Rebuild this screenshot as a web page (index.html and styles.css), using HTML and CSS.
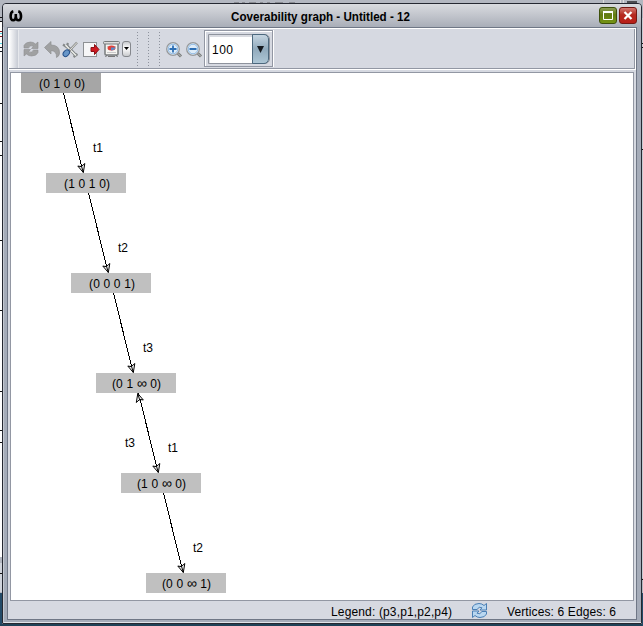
FILE: index.html
```html
<!DOCTYPE html>
<html lang="en">
<head>
<meta charset="utf-8">
<title>Coverability graph</title>
<link rel="stylesheet" href="styles.css">
</head>
<body>
<svg class="backdrop" width="643" height="626" shape-rendering="crispEdges">
  <rect width="643" height="626" fill="#b3b7c0"/>
  <rect y="21" width="2" height="536" fill="#fff"/>
  <path d="M0 17.5h2M0 21.5h2M0 103.5h2M0 141.5h2M0 155.5h2M0 240.5h2M0 310.5h2M0 391.5h2M0 430.5h2M0 442.5h2" stroke="#111"/>
  <path d="M0 31.5h2M0 36.5h2" stroke="#8b1d24"/>
  <path d="M0 33.5h2M0 43.5h2M0 573.5h2" stroke="#55dce8"/>
  <path d="M0 47.5h2M0 51.5h2" stroke="#171b22"/>
  <rect y="563" width="2" height="29" fill="#d0d4dc"/>
  <path d="M0 573.5h2" stroke="#111"/>
  <rect y="593" width="2" height="33" fill="#244b68"/>
  <rect y="624" width="643" height="2" fill="#1f4257"/>
  <path d="M234 2.5h5M242 2.5h3M249 2.5h7M260 2.5h3M267 2.5h3M275 2.5h8M289 2.5h6" stroke="#8a8c92"/>
  <path d="M603.5 0v3M620.5 0v3M623.5 0v3" stroke="#ddd"/>
  <rect x="627" y="1" width="10" height="2" fill="#4b4c50"/>
  <rect x="642" y="18" width="1" height="560" fill="#c6cad2"/>
  <rect x="642" y="593" width="1" height="33" fill="#244b68"/>
  <path d="M642 43.5h1M642 47.5h1M642 149.5h1M642 579.5h1" stroke="#111"/>
</svg>
<div class="window">
  <header class="titlebar">
    <svg class="logo" width="14" height="12" viewBox="0 0 14 12"><path d="M4.300 1.300C.8 2.200.7 10.300 4.200 10.300Q6.600 10.300 6.800 6.500V4V6.500Q7 10.300 9.500 10.300C13 10.300 12.800 2.200 9.300 1.300" fill="none" stroke="#000" stroke-width="2.600"/></svg>
    <h1 class="title"><svg width="190" height="20"><text x="5" y="15" textLength="179" lengthAdjust="spacingAndGlyphs">Coverability graph - Untitled - 12</text></svg></h1>
    <button class="winbtn max" aria-label="Maximize"><svg width="18" height="17"><path d="M4.500 5.500h9v7H4.500z" fill="none" stroke="#fff"/><path d="M4 5h10" stroke="#fff" stroke-width="2"/></svg></button>
    <button class="winbtn close" aria-label="Close"><svg width="18" height="17"><path d="M5.500 5l7 7M12.500 5l-7 7" stroke="#fff" stroke-width="2.200"/></svg></button>
  </header>
  <main class="body">
    <div class="toolbar">
      <span class="grip"></span>
      <svg class="tools" width="186" height="38" viewBox="18 30 186 38">
        <defs>
          <linearGradient id="btn" x2="0" y2="1"><stop stop-color="#c5c7cb"/><stop offset=".45" stop-color="#fff"/><stop offset="1" stop-color="#c5c7ca"/></linearGradient>
          <g id="refresh">
            <path d="M.5 6.500V4Q2 .5 7 .5Q10 .5 12 2.500L14.500 .5V7H8L10 4.800Q7 3 5 6.500Z"/>
            <path d="M14.500 8.500V11Q13 14.500 8 14.500Q5 14.500 3 12.500L.5 14.500V8H7L5 10.200Q8 12 10 8.500Z"/>
          </g>
        </defs>
        <use href="#refresh" x="23.500" y="41.500" fill="#a0a1a2" stroke="#8e8f91" stroke-width=".6"/>
        <path d="M44.500 47.500L51 41.500V45Q59.500 45 59.500 53Q59.500 56 56.500 57.500Q57 51 51 50.500V54Z" fill="#a0a1a2" stroke="#8e8f91" stroke-width=".7"/>
        <path d="M66 45L75.500 55" stroke="#777c7e" stroke-width="3.200"/>
        <path d="M63 44.500L66.500 47L68 43M73.500 57L77.500 54" stroke="#85898a" stroke-width="2.200" fill="none"/>
        <path d="M65.500 45L76 55.500" stroke="#eef0ec" stroke-width="1.500"/>
        <path d="M77 42.500L68.500 51.500" stroke="#898b8b" stroke-width="2.400"/>
        <path d="M77 42.500L70 50" stroke="#e5e4dc" stroke-width="1"/>
        <ellipse cx="66.300" cy="53.200" rx="2.700" ry="3.700" transform="rotate(42 66.300 53.200)" fill="#6796c8" stroke="#234f89"/>
        <rect x="83.500" y="42.500" width="13" height="14" fill="#f6f6f7" stroke="#8d9093"/>
        <path d="M91 47.500H94.500V44.500L99 49.500L94.500 54.500V51.500H91Z" fill="#d01820" stroke="#8b1015"/>
        <path d="M107 55L105.500 57M116 55L117.500 57" stroke="#666"/>
        <rect x="105" y="43" width="13" height="12" rx="1" fill="#f5f5f2" stroke="#777b7c" stroke-width="1.500"/>
        <rect x="103.500" y="41.500" width="16" height="2.500" rx="1" fill="#ddd" stroke="#777b7c"/>
        <path d="M107 46.500h9M107 52.500h9" stroke="#c9c9c9"/>
        <ellipse cx="111.500" cy="48" rx="4" ry="2.500" fill="#df4038"/><path d="M111 47.500h4.500q-.5 2.500-4.500 3Z" fill="#598aca"/>
        <path d="M108 56.500h7" stroke="#777"/>
        <rect x="122.500" y="41.500" width="8" height="15" rx="2.500" fill="url(#btn)" stroke="#85888d"/>
        <path d="M124 47h5l-2.500 3Z" fill="#000"/>
        <path d="M137.500 32V66M148.500 32V66M159.500 32V66" stroke="#8e939d" stroke-dasharray="1 2"/>
        <g id="zoomout">
          <path d="M197 52.500L201 56.500" stroke="#76797a" stroke-width="3"/><path d="M198 53.500L201 56.500" stroke="#c7c9c5"/>
          <circle cx="193" cy="49" r="6.300" fill="#e9f3fc" stroke="#96999b" stroke-width="1.300"/>
          <circle cx="193" cy="49" r="4.800" fill="#deecf8" stroke="#8db8e2"/>
          <path d="M189.500 49h7" stroke="#2d6fb4" stroke-width="1.800"/>
        </g>
        <use href="#zoomout" x="-20"/><path d="M173 45.500v7" stroke="#2d6fb4" stroke-width="1.800"/>
      </svg>
      <div class="combo-frame"><div class="combo"><span class="value"><svg width="28" height="18"><text x="0" y="14" textLength="21">100</text></svg></span><button class="drop" aria-label="Choose zoom"><svg width="16" height="28"><path d="M5 11h7L8.500 18Z" fill="#15191e"/></svg></button></div></div>
    </div>
    <section class="canvas">
      <svg width="622" height="527" viewBox="11 73 622 527">
        <defs><g id="head" fill="none" stroke="#000"><path d="M0 0L-5.500-6.500L-2-5.800L1.500-9Z" fill="#fff"/><path d="M-2-7L0 0"/></g></defs>
        <g stroke="#000" shape-rendering="crispEdges"><path d="M63.500 93L83 172M88.500 193L108 272M113.500 293L133 372M138.500 393L158 472M163.500 493L183 572"/></g>
        <use href="#head" x="83.300" y="172.500"/><use href="#head" x="108.300" y="272.500"/><use href="#head" x="133.300" y="372.500"/><use href="#head" x="158.300" y="472.500"/><use href="#head" x="183.300" y="572.500"/>
        <use href="#head" transform="translate(137.800 393.500) rotate(180)"/>
        <rect class="root" x="21" y="73" width="80" height="20"/>
        <g class="node"><rect x="46" y="173" width="80" height="20"/><rect x="71" y="273" width="80" height="20"/><rect x="96" y="373" width="80" height="20"/><rect x="121" y="473" width="80" height="20"/><rect x="146" y="573" width="80" height="20"/></g>
        <text x="39" y="88" textLength="46">(0 1 0 0)</text>
        <text x="64" y="188" textLength="46">(1 0 1 0)</text>
        <text x="89" y="288" textLength="46">(0 0 0 1)</text>
        <text x="112" y="388" textLength="49">(0 1 <tspan class="inf">∞</tspan> 0)</text>
        <text x="137" y="488" textLength="49">(1 0 <tspan class="inf">∞</tspan> 0)</text>
        <text x="162" y="588" textLength="49">(0 0 <tspan class="inf">∞</tspan> 1)</text>
        <text x="93" y="152">t1</text><text x="118" y="252">t2</text><text x="143" y="352">t3</text>
        <text x="125" y="447">t3</text><text x="168" y="452">t1</text><text x="193" y="552">t2</text>
      </svg>
    </section>
    <footer class="status">
      <svg width="124" height="18"><text x="1" y="14" textLength="121">Legend: (p3,p1,p2,p4)</text></svg>
      <svg width="16" height="16" viewBox="0 0 16 16"><use href="#refresh" fill="#b9d7f0" stroke="#4a7fb5" stroke-width="1"/></svg>
      <svg width="112" height="18"><text x="1" y="14" textLength="109">Vertices: 6 Edges: 6</text></svg>
    </footer>
  </main>
</div>
</body>
</html>
```

FILE: styles.css
```css
* { box-sizing: border-box; }
body {
  margin: 0;
  width: 643px;
  height: 626px;
  overflow: hidden;
  padding: 3px 1px 2px 2px;
  font: 12px "Liberation Sans", Arial, sans-serif;
}
svg { display: block; flex: none; }
text { font: 12px "Liberation Sans", Arial, sans-serif; fill: #000; }
button { padding: 0; }
.backdrop { position: absolute; inset: 0; z-index: -1; }
.window {
  width: 640px;
  height: 621px;
  border: 1px solid #252831;
  border-radius: 4px 4px 1px 1px;
  background: #a5acb9;
  padding: 0 4px 3px;
  overflow: hidden;
  box-shadow: inset 1px 0 #c4c9d1, inset 0 -1px #e1e4e9;
}
.titlebar {
  height: 23px;
  margin: 0 -4px;
  padding: 0 4px 0 6px;
  display: flex;
  align-items: center;
  background: linear-gradient(#d9dbdf, #c4c7ce 45%, #a9aeb8);
}
.title { flex: 1; display: flex; justify-content: center; margin: 0; padding-left: 22px; }
.title text { font-weight: bold; }
.winbtn { width: 18px; height: 17px; border: 1px solid; border-radius: 3px; margin-left: 2px; overflow: hidden; }
.winbtn svg { margin: -1px; }
.max { background: linear-gradient(#8b9d55, #627b12 45%, #759414); border-color: #3e500b; }
.close { background: linear-gradient(#d27770, #b52920 45%, #b91e17); border-color: #741713; }
.body {
  width: 630px;
  height: 593px;
  border: 1px solid #6f7786;
  background: #d6d9e1;
}
.toolbar {
  height: 42px;
  border: 1px solid #fff;
  border-bottom: 0;
  padding-top: 1px;
  box-shadow: inset 0 -1px #fff, inset 0 -2px #9297a3, inset -1px 0 #9297a3;
  display: flex;
}
.grip { width: 10px; height: 38px; background: linear-gradient(90deg, #fff, #c7cbd4); border-right: 1px solid #e6e8ec; }
.tools { margin-left: -1px; }
.combo-frame { width: 69px; height: 37px; border: 1px solid #9297a3; box-shadow: inset 1px 1px #fff, 1px 0 #fff; padding: 3px; }
.combo { width: 62px; height: 30px; display: flex; border: 1px solid #8e939d; border-radius: 0 5px 5px 0; background: #fff; }
.value { width: 44px; padding: 5px 3px; box-shadow: inset 1px 2px #d9dbe1; }
.drop { width: 17px; height: 30px; margin-top: -1px; border: 1px solid #4c687d; border-radius: 0 5px 5px 0; background: linear-gradient(#c6d5e1, #91aabc 50%, #adc6d5); }
.drop svg { margin-left: -1px; }
.canvas { margin: 2px 2px 0 2px; width: 624px; height: 529px; border: 1px solid #9297a3; background: #fff; }
.root { fill: #a6a6a6; }
.node { fill: #c0c0c0; }
.inf { font-size: 14px; }
.status { height: 18px; display: flex; align-items: center; justify-content: flex-end; gap: 18px; padding: 1px 18px 0 0; }
```
